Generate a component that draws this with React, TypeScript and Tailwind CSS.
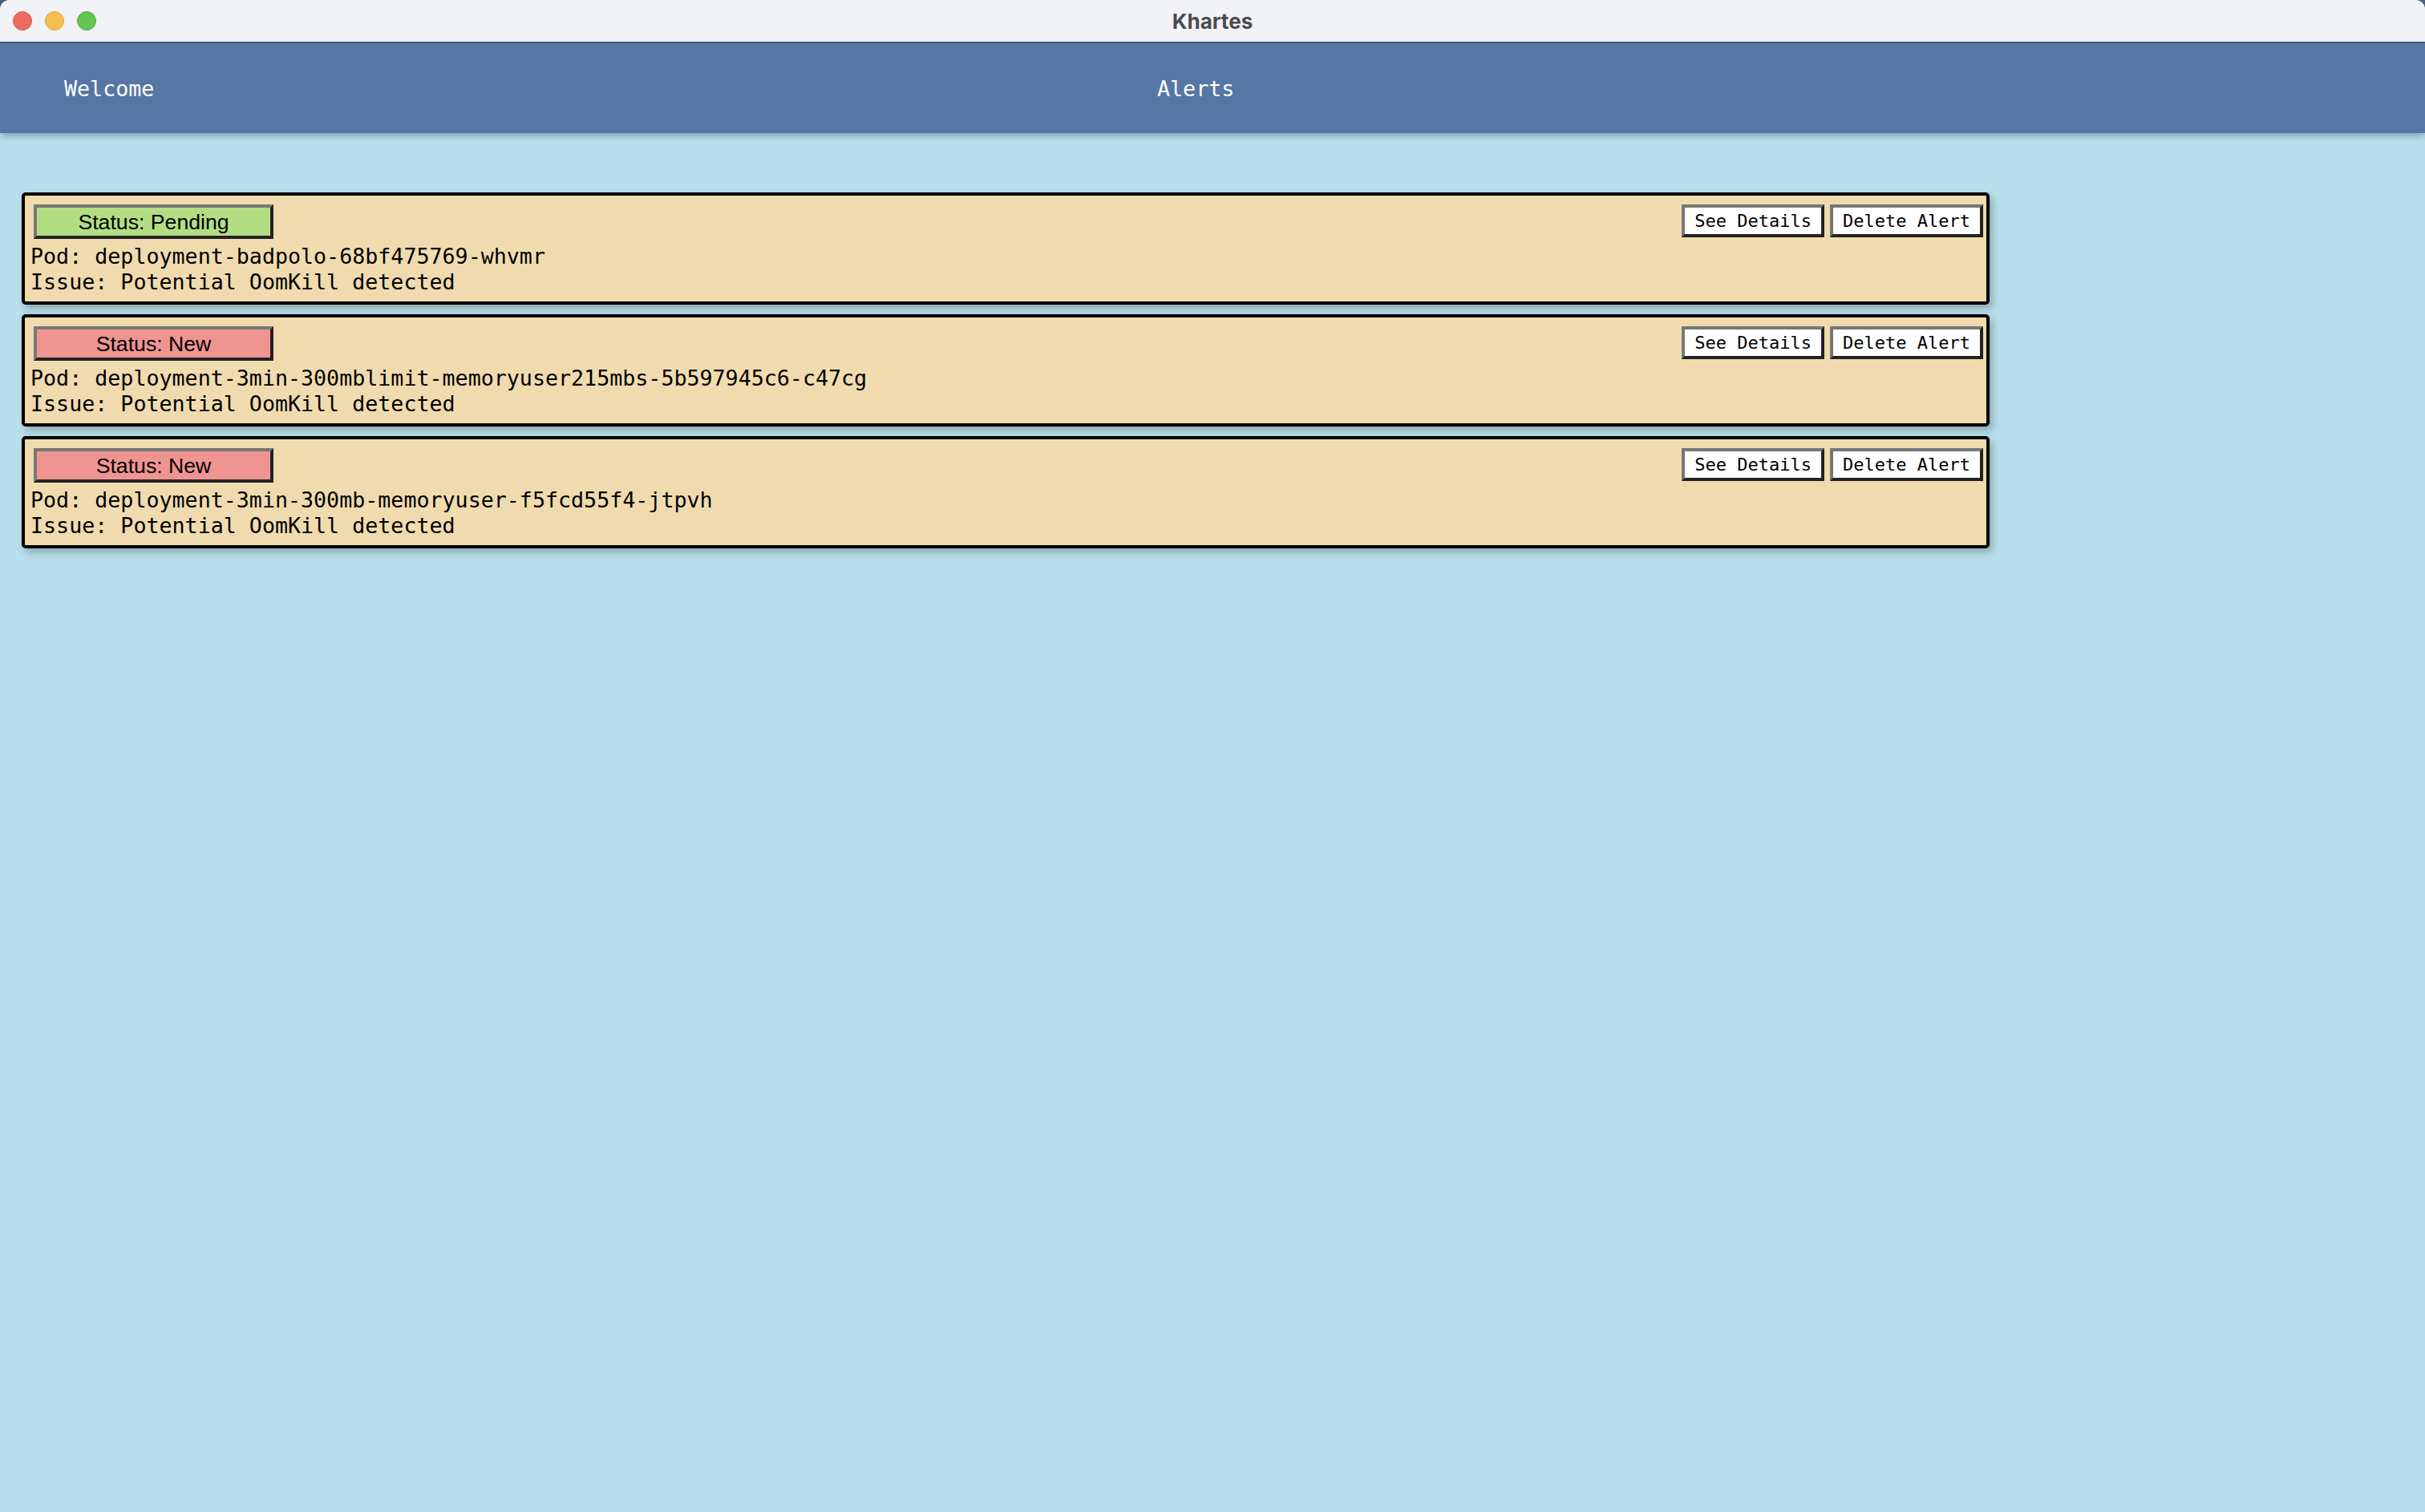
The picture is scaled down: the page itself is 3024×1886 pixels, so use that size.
const mono = "font-['DejaVu_Sans_Mono','Liberation_Mono',monospace]"

// ─── Data ─────────────────────────────────────────────────────────────────────

interface Alert {
  status: 'Pending' | 'New'
  pod: string
  issue: string
}

const alerts: Alert[] = [
  { status: 'Pending', pod: 'deployment-badpolo-68bf475769-whvmr', issue: 'Potential OomKill detected' },
  { status: 'New', pod: 'deployment-3min-300mblimit-memoryuser215mbs-5b597945c6-c47cg', issue: 'Potential OomKill detected' },
  { status: 'New', pod: 'deployment-3min-300mb-memoryuser-f5fcd55f4-jtpvh', issue: 'Potential OomKill detected' },
]

// ─── Pieces ───────────────────────────────────────────────────────────────────

function TitleBar() {
  return (
    <div className="grid h-[54px] grid-cols-[1fr_auto_1fr] items-center rounded-t-[12px] border-b-2 border-[#3d5b8b] bg-[#f2f3f7]">
      <div className="flex items-center gap-4 pl-4">
        <span className="h-6 w-6 rounded-full border border-[#d9574c] bg-[#ee6a5f]" />
        <span className="h-6 w-6 rounded-full border border-[#dea63a] bg-[#f5be4f]" />
        <span className="h-6 w-6 rounded-full border border-[#4fae42] bg-[#62c554]" />
      </div>
      <div className="font-['Inter',sans-serif] text-[26px] font-bold text-[#4b4b4d]">Khartes</div>
      <div />
    </div>
  )
}

function NavBar() {
  return (
    <nav className={`relative z-10 flex h-[112px] items-center bg-[#5676a6] pt-[2px] text-[26.67px] text-white shadow-[0_4px_8px_rgba(40,60,70,0.35)] ${mono}`}>
      <a className="w-[1443px] pl-[80px]">Welcome</a>
      <a>Alerts</a>
    </nav>
  )
}

function AlertCard({ alert }: { alert: Alert }) {
  const badge =
    alert.status === 'Pending' ? 'bg-[#b3dd83]' : 'bg-[#f09491]'

  return (
    <div className="ml-[27px] w-[2454px] rounded-[5px] border-4 border-black bg-[#f0dbae] shadow-[4px_5px_10px_rgba(60,70,60,0.35)]">
      {/* Status + actions */}
      <div className="flex items-start justify-between pl-[11px] pr-[4px] pt-[11px]">
        <div
          className={`flex h-[43px] w-[299px] items-center justify-center border-4 border-t-[#777] border-l-[#777] border-b-[#222] border-r-[#222] font-['Liberation_Sans',Arial,sans-serif] text-[26.67px] text-black ${badge}`}
        >
          Status: {alert.status}
        </div>
        <div className={`flex gap-[7px] text-[22px] text-black ${mono}`}>
          <button className="flex h-[41px] items-center border-4 border-t-[#777] border-l-[#777] border-b-[#222] border-r-[#222] bg-white px-3">
            See Details
          </button>
          <button className="flex h-[41px] items-center border-4 border-t-[#777] border-l-[#777] border-b-[#222] border-r-[#222] bg-white px-3">
            Delete Alert
          </button>
        </div>
      </div>

      {/* Details */}
      <div className={`px-[7px] pb-[8px] pt-[6px] text-[26.67px] leading-[32px] text-black ${mono}`}>
        <div>Pod: {alert.pod}</div>
        <div>Issue: {alert.issue}</div>
      </div>
    </div>
  )
}

// ─── App ──────────────────────────────────────────────────────────────────────

export default function App() {
  return (
    <div className="h-[1886px] w-full bg-[#44608c]">
      <div className="flex h-full flex-col rounded-t-[12px] bg-[#b9dfec]">
        <TitleBar />
        <NavBar />
        <main className="flex flex-col gap-[12px] pt-[74px]">
          {alerts.map((a) => (
            <AlertCard key={a.pod} alert={a} />
          ))}
        </main>
      </div>
    </div>
  )
}
